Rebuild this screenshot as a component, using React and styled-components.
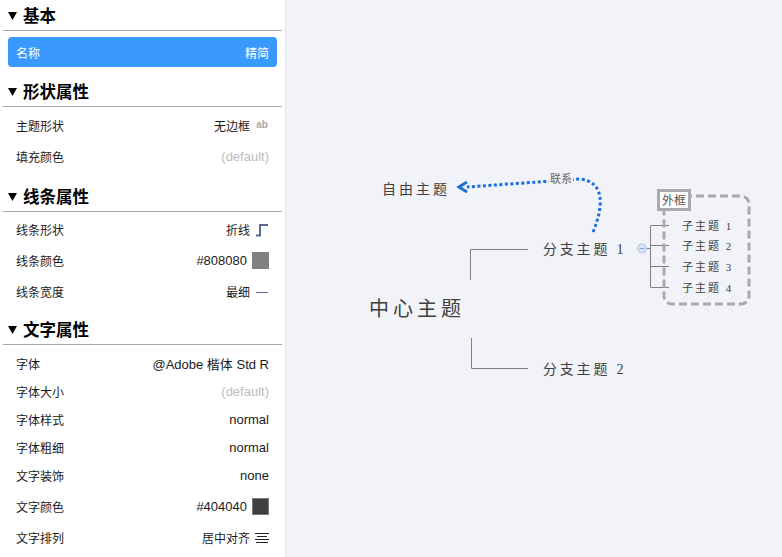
import React from "react";
import styled, { createGlobalStyle } from "styled-components";

const Global = createGlobalStyle`
  html, body {
    margin: 0;
    padding: 0;
    height: 100%;
    overflow: hidden;
  }
  body {
    font-family: "Liberation Sans", "Noto Sans CJK SC", sans-serif;
  }
`;

const Page = styled.div`
  display: flex;
  width: 782px;
  height: 557px;
  background: #f2f3f8;
`;

const Sidebar = styled.div`
  width: 285px;
  height: 100%;
  background: #ffffff;
  border-right: 1px solid #e6e7ec;
  overflow: hidden;
  flex-shrink: 0;
`;

const Section = styled.div`
  padding-bottom: ${(p) => p.$gap || 8}px;
`;

const Header = styled.div`
  height: 31px;
  margin: 0 3px;
  padding-left: 5px;
  display: flex;
  align-items: center;
  gap: 6px;
  border-bottom: 1px solid #a6a6a6;
  font-family: "Noto Sans CJK SC", sans-serif;
  font-weight: 700;
  font-size: 16.5px;
  color: #000;
  box-sizing: border-box;
`;

const Rows = styled.div`
  padding-top: ${(p) => p.$top || 3}px;
`;

const Row = styled.div`
  height: ${(p) => (p.$tall ? 31 : 28)}px;
  padding: ${(p) => p.$shift || 0}px 16px 0;
  display: flex;
  align-items: center;
  justify-content: space-between;
  font-size: 13px;
  color: #1a1a1a;
`;

const SelectedRow = styled(Row)`
  height: 30px;
  margin: 6px 8px 0;
  padding: 0 8px;
  border-radius: 4px;
  background: #3a99fc;
  color: #fff;
`;

const Label = styled.span`
  font-family: "Noto Sans CJK SC", sans-serif;
  font-size: 12px;
`;

const Value = styled.span`
  display: flex;
  align-items: center;
  gap: 5px;
  color: ${(p) => (p.$muted ? "#bdbdbd" : "inherit")};
`;

const Swatch = styled.span`
  width: 15px;
  height: 15px;
  background: ${(p) => p.$color};
  border: 1px solid ${(p) => p.$border || p.$color};
`;

const Ab = styled.span`
  font-size: 10px;
  font-weight: 700;
  color: #a8a8a8;
  width: 14px;
  text-align: center;
  margin-top: -3px;
`;

const Canvas = styled.div`
  position: relative;
  flex: 1;
  height: 100%;
`;

const Wires = styled.svg`
  position: absolute;
  left: 0;
  top: 0;
`;

const Topic = styled.div`
  position: absolute;
  left: ${(p) => p.$x - 286}px;
  top: ${(p) => p.$y}px;
  transform: translateY(-50%);
  font-family: "Liberation Serif", "Noto Sans CJK SC", serif;
  font-size: ${(p) => p.$size}px;
  letter-spacing: ${(p) => p.$spacing}px;
  color: #404040;
  white-space: nowrap;
`;

const LinkLabel = styled.div`
  position: absolute;
  left: ${549 - 286}px;
  top: 171px;
  padding: 0 1px;
  font-family: "Noto Sans CJK SC", sans-serif;
  font-size: 11px;
  line-height: 15px;
  color: #666;
  background: #f2f3f8;
`;

const FrameTag = styled.div`
  position: absolute;
  left: ${657 - 286}px;
  top: 189px;
  height: 16px;
  padding: 0 2px;
  border: 3px solid #aaaaaa;
  background: #fff;
  font-family: "Noto Sans CJK SC", sans-serif;
  font-size: 12px;
  line-height: 16px;
  color: #555;
`;

const Triangle = () => (
  <svg width="9" height="9" viewBox="0 0 9 9">
    <polygon points="0,1 9,1 4.5,9" fill="#000" />
  </svg>
);

const Elbow = () => (
  <svg width="14" height="14" viewBox="0 0 14 14">
    <path d="M1 12.5 H5 V2 H13" fill="none" stroke="#5a6a8e" strokeWidth="2" />
  </svg>
);

const ThinLine = () => (
  <svg width="14" height="6" viewBox="0 0 14 6">
    <line x1="1" y1="3.5" x2="13" y2="3.5" stroke="#5a6a8e" strokeWidth="1" />
  </svg>
);

const AlignCenter = () => (
  <svg width="14" height="12" viewBox="0 0 14 12">
    {[
      [0, 14, 1.5],
      [2, 12, 4.5],
      [0, 14, 7.5],
      [1, 13, 10.5],
    ].map(([a, b, y], i) => (
      <line key={i} x1={a} x2={b} y1={y} y2={y} stroke="#222" strokeWidth="1" />
    ))}
  </svg>
);

const subTopics = [
  { n: 1, y: 225 },
  { n: 2, y: 245 },
  { n: 3, y: 266 },
  { n: 4, y: 287 },
];

export default function App() {
  return (
    <Page>
      <Global />
      <Sidebar>
        <Section $gap={9}>
          <Header>
            <Triangle />
            基本
          </Header>
          <SelectedRow>
            <Label>名称</Label>
            <Label>精简</Label>
          </SelectedRow>
        </Section>

        <Section $gap={9}>
          <Header>
            <Triangle />
            形状属性
          </Header>
          <Rows>
            <Row $tall>
              <Label>主题形状</Label>
              <Value>
                <Label>无边框</Label>
                <Ab>ab</Ab>
              </Value>
            </Row>
            <Row $tall>
              <Label>填充颜色</Label>
              <Value $muted>(default)</Value>
            </Row>
          </Rows>
        </Section>

        <Section $gap={7}>
          <Header>
            <Triangle />
            线条属性
          </Header>
          <Rows $top={2}>
            <Row $tall>
              <Label>线条形状</Label>
              <Value>
                <Label>折线</Label>
                <Elbow />
              </Value>
            </Row>
            <Row $tall>
              <Label>线条颜色</Label>
              <Value>
                #808080
                <Swatch $color="#808080" />
              </Value>
            </Row>
            <Row $tall>
              <Label>线条宽度</Label>
              <Value>
                <Label>最细</Label>
                <ThinLine />
              </Value>
            </Row>
          </Rows>
        </Section>

        <Section>
          <Header>
            <Triangle />
            文字属性
          </Header>
          <Rows $top={4}>
            <Row>
              <Label>字体</Label>
              <Value>@Adobe 楷体 Std R</Value>
            </Row>
            <Row>
              <Label>字体大小</Label>
              <Value $muted>(default)</Value>
            </Row>
            <Row>
              <Label>字体样式</Label>
              <Value>normal</Value>
            </Row>
            <Row>
              <Label>字体粗细</Label>
              <Value>normal</Value>
            </Row>
            <Row>
              <Label>文字装饰</Label>
              <Value>none</Value>
            </Row>
            <Row $tall $shift={2}>
              <Label>文字颜色</Label>
              <Value>
                #404040
                <Swatch $color="#404040" $border="#7a7a7a" />
              </Value>
            </Row>
            <Row $tall>
              <Label>文字排列</Label>
              <Value>
                <Label>居中对齐</Label>
                <AlignCenter />
              </Value>
            </Row>
          </Rows>
        </Section>
      </Sidebar>

      <Canvas>
        <Wires width="496" height="557" viewBox="286 0 496 557">
          <g stroke="#808080" strokeWidth="1" fill="none">
            <path d="M470.5 280 V249.5 H528" />
            <path d="M471.5 338 V368.5 H528" />
            <path d="M647 248.5 H650.5" />
            <path d="M650.5 226 V287" />
            {subTopics.map((s) => (
              <path key={s.n} d={`M650.5 ${s.y + 0.5} H669`} />
            ))}
          </g>
          <circle cx="642" cy="248.5" r="4.5" fill="#d7e2fb" stroke="#a9c0f2" strokeWidth="1" />
          <line x1="639.5" x2="644.5" y1="248.5" y2="248.5" stroke="#8ea8df" strokeWidth="1" />

          <rect
            x="664"
            y="196"
            width="85"
            height="108"
            rx="8"
            fill="none"
            stroke="#aaaaaa"
            strokeWidth="3"
            strokeDasharray="8 4"
          />

          <path
            d="M593 232 C 603 208, 606 182, 580 179 L 467 187"
            fill="none"
            stroke="#1a6fd8"
            strokeWidth="3"
            strokeDasharray="3 2.5"
          />
          <polyline
            points="467,182 459,187 467,192"
            fill="none"
            stroke="#1a6fd8"
            strokeWidth="3"
          />
        </Wires>

        <LinkLabel>联系</LinkLabel>

        <Topic $x={382} $y={188} $size={14} $spacing={3}>
          自由主题
        </Topic>
        <Topic $x={543} $y={248} $size={14} $spacing={2.8}>
          分支主题 1
        </Topic>
        <Topic $x={369} $y={307} $size={20} $spacing={4}>
          中心主题
        </Topic>
        <Topic $x={543} $y={368} $size={14} $spacing={2.8}>
          分支主题 2
        </Topic>
        {subTopics.map((s) => (
          <Topic key={s.n} $x={682} $y={s.y} $size={11} $spacing={2}>
            子主题 {s.n}
          </Topic>
        ))}

        <FrameTag>外框</FrameTag>
      </Canvas>
    </Page>
  );
}
